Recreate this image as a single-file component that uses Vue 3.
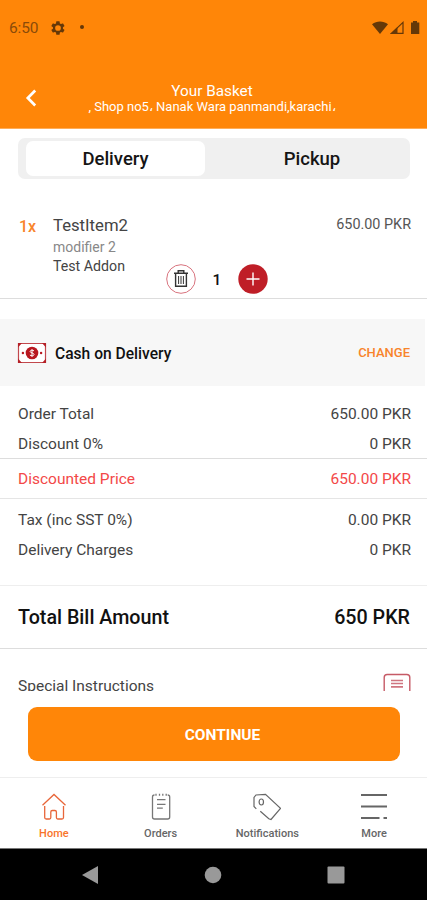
<script setup>
const charges = [
  { label: 'Order Total', value: '650.00 PKR', cls: 'order' },
  { label: 'Discount 0%', value: '0 PKR', cls: 'discount' },
]
const extras = [
  { label: 'Tax (inc SST 0%)', value: '0.00 PKR', cls: 'tax' },
  { label: 'Delivery Charges', value: '0 PKR', cls: 'delivery' },
]
</script>

<template>
  <div class="phone">
    <header class="header">
      <div class="status">
        <span class="clock">6:50</span>
        <svg class="gear" viewBox="0 0 24 24" width="16" height="16"><path fill="currentColor" fill-rule="evenodd" d="M19.4 13a7.500 7.500 0 0 0 0-2l2.100-1.600a.5.5 0 0 0 .1-.7l-2-3.400a.5.5 0 0 0-.6-.2l-2.500 1a7.300 7.300 0 0 0-1.700-1l-.4-2.700a.5.5 0 0 0-.5-.4h-4a.5.5 0 0 0-.5.400L9 5.100a7.300 7.300 0 0 0-1.700 1l-2.500-1a.5.5 0 0 0-.6.200l-2 3.400a.5.5 0 0 0 .1.700L4.500 11a7.500 7.500 0 0 0 0 2l-2.200 1.600a.5.5 0 0 0-.1.700l2 3.400c.1.200.4.300.6.200l2.500-1a7.300 7.300 0 0 0 1.700 1l.4 2.700c0 .2.200.4.5.4h4c.3 0 .5-.2.5-.4l.4-2.700a7.300 7.300 0 0 0 1.700-1l2.500 1c.2.100.5 0 .6-.2l2-3.400a.5.5 0 0 0-.1-.7ZM12 16.300a4.300 4.300 0 1 1 0-8.600 4.300 4.300 0 0 1 0 8.600Z"/></svg>
        <i class="dot"></i>
        <svg class="signals" viewBox="0 0 48 16" width="48" height="16">
          <path fill="currentColor" d="M0 4.200C4.800.7 11.200.7 16 4.200L8 14Z"/>
          <path fill="none" stroke="currentColor" stroke-width="1.200" d="M19.500 13.400 31 2.300v11.100Z"/>
          <path fill="currentColor" d="M18 14 25.500 7v7Z"/>
          <path fill="currentColor" d="M39 2.500h2V1h4v1.500h2.300V14H39Z"/>
        </svg>
      </div>
      <div class="titlebar">
        <svg class="back" viewBox="0 0 12 18" width="12" height="18"><path fill="none" stroke="#fff" stroke-width="2.700" d="M10.200 1.500 2.800 9l7.400 7.500"/></svg>
        <div class="titles">
          <div class="title"><span>Your Basket</span></div>
          <div class="address"><span>, Shop no5، Nanak Wara panmandi,karachi،</span></div>
        </div>
      </div>
    </header>

    <main class="content">
      <div class="tabs">
        <div class="tab active"><span>Delivery</span></div>
        <div class="tab"><span>Pickup</span></div>
      </div>

      <section class="item">
        <div class="item-top">
          <span class="qty">1x</span>
          <div class="desc">
            <div class="name"><span>TestItem2</span></div>
            <div class="modifier"><span>modifier 2</span></div>
            <div class="addon"><span>Test Addon</span></div>
          </div>
          <span class="price">650.00 PKR</span>
        </div>
        <div class="stepper">
          <svg viewBox="0 0 30 30" width="30" height="30">
            <circle cx="15" cy="15" r="14.300" fill="#fff" stroke="#d8737e" stroke-width="1"/>
            <g fill="none" stroke="#333" stroke-width="1.400">
              <path d="M8 9.200h14M12.200 9V6.700h5.600V9M9.600 9.500v12.800h10.800V9.500"/>
              <path d="M12.600 12v8M15 12v8M17.400 12v8" stroke-width="1"/>
            </g>
          </svg>
          <span class="count">1</span>
          <svg viewBox="0 0 30 30" width="30" height="30">
            <circle cx="15" cy="15" r="14.700" fill="#bf1e27"/>
            <path d="M15 8.500v13M8.500 15h13" stroke="#fff" stroke-width="1.400"/>
          </svg>
        </div>
      </section>

      <section class="payment">
        <svg viewBox="0 0 30 22" width="30" height="22">
          <path d="M1.500 1.500h27v19h-27Z" fill="#fff" stroke="#c2484d" stroke-width="1.200"/>
          <path d="M1 1h4L1 5.500ZM29 1h-4l4 4.500ZM1 21h4l-4-4.500ZM29 21h-4l4-4.500Z" fill="#b52027"/>
          <circle cx="15" cy="11" r="6.300" fill="#b81820"/>
          <circle cx="5.900" cy="11" r="1.200" fill="#b81820"/>
          <circle cx="24.100" cy="11" r="1.200" fill="#b81820"/>
          <path d="M17 8.900c-1-1-3.900-.9-3.900.6 0 1.700 3.900 1.100 3.900 3 0 1.600-3 1.700-4.100.5M15 7.200v7.600" fill="none" stroke="#fff" stroke-width="1"/>
        </svg>
        <span class="method">Cash on Delivery</span>
        <span class="change">CHANGE</span>
      </section>

      <section class="charges">
        <div v-for="c in charges" :key="c.label" class="row" :class="c.cls">
          <span class="label">{{ c.label }}</span><span class="value">{{ c.value }}</span>
        </div>
      </section>
      <section class="row discounted">
        <span class="label">Discounted Price</span><span class="value">650.00 PKR</span>
      </section>
      <section class="extras">
        <div v-for="c in extras" :key="c.label" class="row" :class="c.cls">
          <span class="label">{{ c.label }}</span><span class="value">{{ c.value }}</span>
        </div>
      </section>
      <section class="total">
        <span class="total-label">Total Bill Amount</span><span class="total-value">650 PKR</span>
      </section>
      <section class="special">
        <span class="special-label">Special Instructions</span>
        <svg viewBox="0 0 28 24" width="28" height="24">
          <path d="M1.200 24V4.500q0-3 3-3h19.600q3 0 3 3V24" fill="none" stroke="#c65a66" stroke-width="1.400"/>
          <path d="M8 7.500h12M8 10.500h12M8 13.800h12" stroke="#cf7580" stroke-width="1.700"/>
        </svg>
      </section>
    </main>

    <div class="action"><button class="continue"><span>CONTINUE</span></button></div>

    <nav class="nav">
      <div class="nav-item home">
        <svg viewBox="0 0 28 28" width="28" height="28" fill="none" stroke="#e8663a" stroke-width="1.300"><path d="M2.500 12.300 14 1.500l11.500 10.800M4.700 13v11.500q0 1.500 1.500 1.500h3.300q1.300 0 1.300-1.500V19q0-1.500 1.500-1.500h2.600q1.500 0 1.500 1.500v5.500q0 1.500 1.300 1.500h4.300q1.500 0 1.500-1.500V13"/></svg>
        <span>Home</span>
      </div>
      <div class="nav-item orders">
        <svg viewBox="0 0 28 28" width="28" height="28" fill="none" stroke="#777" stroke-width="1.300"><path d="M7.500 2Q5.500 2 5.500 4v20q0 2 2 2h13.200q2 0 2-2V4q0-2-2-2M9 .8v2M12.500.8v2M15.800.8v2M19.200.8v2"/><path d="M10 6.700h8.500M10 11.300h8.500M10 15.200h5.800"/></svg>
        <span>Orders</span>
      </div>
      <div class="nav-item notifications">
        <svg viewBox="0 0 28 28" width="28" height="28" fill="none" stroke="#666" stroke-width="1.200"><path d="M3.300 15.800 1 13.500V4.500L3 2l9.500-.7 15 14L18 26.500l-2.200-.7-8.500-7.600"/><ellipse cx="8.300" cy="9" rx="2.200" ry="3"/></svg>
        <span>Notifications</span>
      </div>
      <div class="nav-item more">
        <svg viewBox="0 0 28 28" width="28" height="28" fill="none" stroke="#666" stroke-width="1.800"><path d="M1 2h26M1 13.500h26M1 25h18.500M23.500 25h3.500"/></svg>
        <span>More</span>
      </div>
    </nav>

    <footer class="system">
      <svg viewBox="0 0 18 20" width="18" height="20"><path d="M17 1v18L1 10Z" fill="#999"/></svg>
      <svg viewBox="0 0 18 18" width="18" height="18"><circle cx="9" cy="9" r="8.300" fill="#999"/></svg>
      <svg viewBox="0 0 18 18" width="18" height="18"><rect x=".5" y=".5" width="17" height="17" rx="1" fill="#999"/></svg>
    </footer>
  </div>
</template>

<style>
body { margin: 0; background: #fff; }
</style>

<style scoped>
.phone { width: 427px; height: 900px; display: flex; flex-direction: column; overflow: hidden; background: #fff; font-family: Roboto, "Noto Sans", sans-serif; color: #444; }
.phone * { box-sizing: border-box; }
span { white-space: nowrap; }
svg { display: block; flex: none; }
.header { flex: none; height: 129px; background: #ff8608; border-bottom: 1px solid #ffad58; }
.status { height: 56px; padding: 0 7px 0 9px; display: flex; align-items: center; color: #653808; }
.clock { width: 30px; font-size: 15.5px; letter-spacing: -.15px; color: #8a4b08; }
.gear { margin-left: 11px; margin-top: -1px; }
.dot { width: 4px; height: 4px; border-radius: 50%; background: currentColor; margin-left: 14px; margin-top: -2px; }
.signals { margin-left: auto; margin-top: -1px; }
.titlebar { display: flex; padding-left: 25px; align-items: flex-start; }
.back { margin-top: 33px; }
.titles { width: 350px; padding-top: 26px; text-align: center; color: #fff; }
.title { font-size: 15.3px; line-height: 18px; font-weight: 400; }
.address { font-size: 13px; line-height: 14px; font-weight: 400; }
.content { flex: none; height: 562px; overflow: hidden; }
.tabs { width: 392px; height: 41px; margin: 9px 0 0 18px; padding: 3px 0 3px 8px; display: flex; background: #f0f0f0; border-radius: 7px; }
.tab { flex: none; width: 179px; height: 35px; margin-right: 17px; display: flex; align-items: center; justify-content: center; font-size: 18.5px; font-weight: 500; color: #151515; border-radius: 7px; }
.tab:last-child { margin-right: 0; padding-left: 1px; }
.tab.active { background: #fff; }
.item { height: 120px; padding-top: 36px; border-bottom: 1px solid #ddd; }
.item-top { display: flex; height: 49px; padding: 0 16px 0 19px; }
.qty { width: 34px; font-size: 16px; line-height: 23px; font-weight: 500; color: #f8842b; }
.desc { flex: 1; }
.name { font-size: 16.700px; line-height: 22px; }
.modifier { font-size: 14px; line-height: 20px; color: #888; }
.addon { font-size: 14.200px; line-height: 19px; }
.price { font-size: 14.400px; line-height: 20px; color: #555; }
.stepper { display: flex; align-items: center; padding-left: 166px; height: 30px; }
.count { width: 42px; text-align: center; font-size: 15.500px; font-weight: 500; color: #111; padding-top: 1px; }
.payment { width: 425px; height: 67px; margin-top: 20px; padding: 0 16px 0 17px; display: flex; align-items: center; background: #f7f7f7; }
.method { margin-left: 8px; padding-top: 2px; font-size: 15.600px; font-weight: 500; color: #111; }
.change { margin-left: auto; margin-right: -1px; font-size: 13px; font-weight: 500; color: #f8842b; }
.charges { height: 73px; padding-top: 13px; border-bottom: 1px solid #ddd; }
.row { display: flex; justify-content: space-between; align-items: center; height: 30px; padding: 0 16px 0 18px; font-size: 15.500px; }
.discounted { height: 40px; padding-top: 1px; color: #f34848; border-bottom: 1px solid #e5e5e5; }
.extras { height: 87px; padding-top: 6px; border-bottom: 1px solid #eee; }
.total { height: 63px; padding: 1px 17px 0 18px; display: flex; align-items: center; justify-content: space-between; border-bottom: 1px solid #ddd; font-size: 19.700px; font-weight: 500; color: #111; }
.special { display: flex; justify-content: space-between; padding: 24px 16px 0 18px; font-size: 15.500px; line-height: 26px; }
.action { flex: none; height: 87px; padding: 16px 27px 0 28px; border-bottom: 1px solid #eee; }
.continue { width: 372px; height: 54px; padding: 0; border: 0; border-radius: 9px; background: #ff8608; color: #fff; font: 700 15.500px/56px Roboto, sans-serif; padding-left: 17px; }
.nav { flex: none; height: 71px; display: flex; border-bottom: 1px solid #777; }
.nav-item { width: 107px; padding: 15px 0 0 1px; display: flex; flex-direction: column; align-items: center; font-size: 11px; line-height: 12px; font-weight: 500; color: #666; }
.nav-item svg { margin-bottom: 7px; }
.nav-item.home { color: #f8742b; }
.system { flex: 1; background: #000; display: flex; align-items: center; padding-left: 81px; gap: 105px; }
</style>
